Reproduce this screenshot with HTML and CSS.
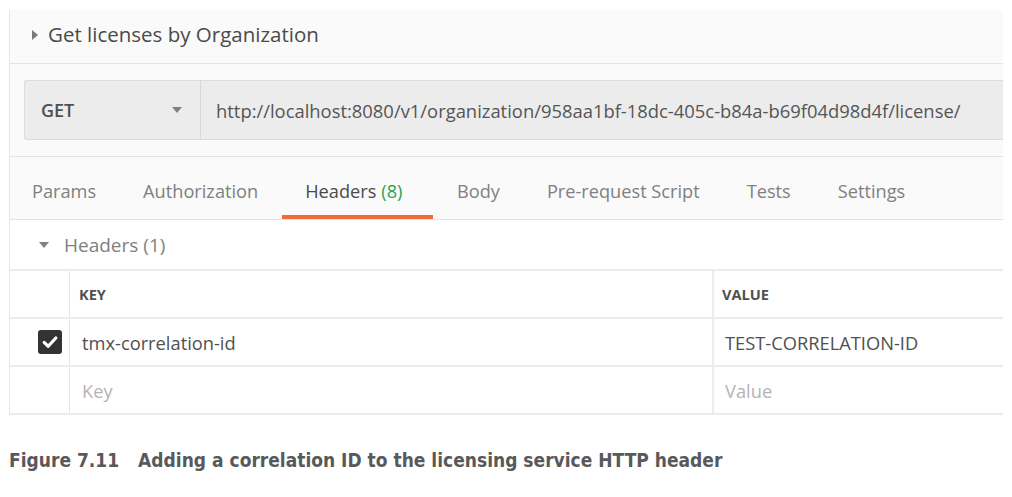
FILE: index.html
```html
<!DOCTYPE html>
<html>
<head>
<meta charset="utf-8">
<link rel="stylesheet" href="styles.css">
</head>
<body>
<div class="panel">
  <div class="title-row">
    <span class="tri-right"></span>
    <span class="title">Get licenses by Organization</span>
  </div>
  <div class="url-section">
    <div class="url-box">
      <div class="method">
        <span class="method-name">GET</span>
        <span class="tri-down"></span>
      </div>
      <div class="url">http://localhost:8080/v1/organization/958aa1bf-18dc-405c-b84a-b69f04d98d4f/license/</div>
    </div>
  </div>
  <div class="tabs">
    <div class="tab">Params</div>
    <div class="tab">Authorization</div>
    <div class="tab active">Headers <span class="count">(8)</span></div>
    <div class="tab">Body</div>
    <div class="tab">Pre-request Script</div>
    <div class="tab">Tests</div>
    <div class="tab">Settings</div>
  </div>
  <div class="content">
    <div class="section-row">
      <span class="tri-down small"></span>
      <span class="section-title">Headers (1)</span>
    </div>
    <div class="table">
      <div class="row head">
        <div class="cell check"></div>
        <div class="cell key">KEY</div>
        <div class="cell value">VALUE</div>
      </div>
      <div class="row">
        <div class="cell check">
          <span class="checkbox">
            <svg width="18" height="18" viewBox="0 0 16 16"><path d="M2.8 8.4 L6.4 11.8 L13.2 4.4" fill="none" stroke="#fff" stroke-width="2.8" stroke-linecap="round" stroke-linejoin="round"/></svg>
          </span>
        </div>
        <div class="cell key text">tmx-correlation-id</div>
        <div class="cell value text">TEST-CORRELATION-ID</div>
      </div>
      <div class="row">
        <div class="cell check"></div>
        <div class="cell key text placeholder">Key</div>
        <div class="cell value text placeholder">Value</div>
      </div>
    </div>
  </div>
</div>
<p class="caption"><span class="fig">Figure 7.11</span>Adding a correlation ID to the licensing service HTTP header</p>
</body>
</html>
```

FILE: styles.css
```css
html, body {
  margin: 0;
  padding: 0;
  background: #ffffff;
}
body {
  font-family: "Open Sans", "Noto Sans", sans-serif;
  color: #505050;
}
.panel {
  margin: 10px 0 0 9px;
  width: 993px;
  border-left: 1px solid #e6e6e6;
  background: #fafafa;
}
.title-row {
  height: 54px;
  display: flex;
  align-items: center;
  padding-left: 22px;
  padding-bottom: 6px;
  border-bottom: 1px solid #e4e4e4;
  box-sizing: border-box;
}
.tri-right {
  width: 0;
  height: 0;
  border-top: 5px solid transparent;
  border-bottom: 5px solid transparent;
  border-left: 6px solid #7a7a7a;
  margin-right: 10px;
  margin-top: 2px;
}
.title {
  font-size: 20.5px;
  color: #4a4a4a;
}
.url-section {
  padding: 16px 0 16px 14px;
  border-bottom: 1px solid #e4e4e4;
}
.url-box {
  display: flex;
  height: 60px;
  background: #ececec;
  border: 1px solid #dcdcdc;
  border-right: none;
  border-radius: 3px 0 0 3px;
  box-sizing: border-box;
}
.method {
  width: 176px;
  display: flex;
  align-items: center;
  justify-content: space-between;
  padding: 0 18px 0 16px;
  box-sizing: border-box;
  border-right: 1px solid #d8d8d8;
}
.method-name {
  font-size: 18px;
  font-weight: 600;
  color: #505050;
}
.tri-down {
  width: 0;
  height: 0;
  border-left: 5px solid transparent;
  border-right: 5px solid transparent;
  border-top: 6px solid #808080;
}
.url {
  display: flex;
  align-items: center;
  padding-left: 15px;
  font-size: 18.4px;
  color: #555;
}
.tabs {
  display: flex;
  height: 63px;
  align-items: stretch;
  border-bottom: 1px solid #e4e4e4;
  box-sizing: border-box;
}
.tab {
  padding: 10px 23.5px 0;
  display: flex;
  align-items: center;
  font-size: 18.2px;
  color: #808080;
  border-bottom: 4px solid transparent;
}
.tab:first-child {
  padding-left: 22px;
}
.tab.active {
  color: #4a4a4a;
  border-bottom-color: #f26b3a;
  padding-right: 31px;
}
.count {
  color: #26a456;
  margin-left: 5px;
}
.content {
  background: #ffffff;
}
.section-row {
  height: 49px;
  display: flex;
  align-items: center;
  padding-left: 29px;
  border-bottom: 2px solid #ececec;
}
.tri-down.small {
  margin-right: 15px;
}
.section-title {
  font-size: 19px;
  color: #808080;
}
.row {
  display: flex;
  height: 48px;
  border-bottom: 2px solid #ececec;
  box-sizing: border-box;
}
.cell {
  display: flex;
  align-items: center;
  box-sizing: border-box;
}
.cell.check {
  width: 60px;
  justify-content: flex-end;
  padding-right: 7px;
  border-right: 1px solid #e6e6e6;
}
.cell.key {
  width: 644px;
  padding-left: 9px;
  border-right: 2px solid #ececec;
}
.cell.value {
  flex: 1;
  padding-left: 8px;
}
.row.head .cell.key,
.row.head .cell.value {
  font-size: 14.6px;
  font-weight: 700;
  color: #505050;
}
.cell.text {
  font-size: 18.3px;
  color: #505050;
  padding-left: 12px;
}
.cell.value.text {
  padding-left: 11px;
}
.cell.placeholder {
  color: #b4b4b4;
}
.checkbox {
  width: 24px;
  height: 24px;
  border-radius: 3px;
  background: #333333;
  display: flex;
  align-items: center;
  justify-content: center;
}
.caption {
  margin: 34px 0 0 9px;
  font-family: "DejaVu Sans Condensed", "DejaVu Sans", sans-serif;
  font-stretch: condensed;
  font-weight: 700;
  font-size: 19px;
  color: #58595b;
}
.fig {
  margin-right: 19px;
}
```
